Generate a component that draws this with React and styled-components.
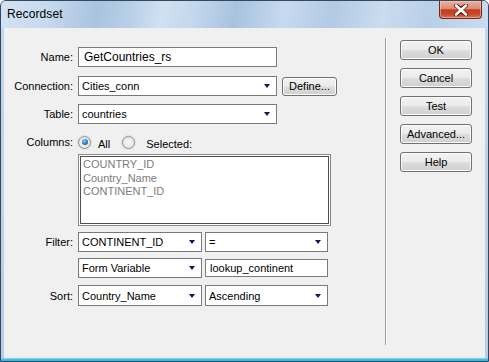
import React from "react";
import styled, { createGlobalStyle } from "styled-components";

const Global = createGlobalStyle`
  html, body {
    margin: 0;
    padding: 0;
    background: #ffffff;
  }
  body {
    font-family: "Liberation Sans", Arial, sans-serif;
  }
`;

const App = () => {
  return (
    <>
      <Global />
      <Window>
        <TitleBar>
          <Title>Recordset</Title>
          <CloseButton>
            <svg width="16" height="12" viewBox="0 0 16 12">
              <path
                d="M3 1.5 L8 5 L13 1.5 M3 10.5 L8 7 L13 10.5"
                stroke="#5b1a10"
                strokeWidth="4.2"
                fill="none"
                strokeLinecap="round"
              />
              <path
                d="M3 1.5 L13 10.5 M13 1.5 L3 10.5"
                stroke="#ffffff"
                strokeWidth="2.6"
                fill="none"
                strokeLinecap="round"
              />
            </svg>
          </CloseButton>
        </TitleBar>
        <Client>
          <FormPanel>
            <Row>
              <Label>Name:</Label>
              <TextInput $width={199} $big>
                GetCountries_rs
              </TextInput>
            </Row>
            <Row $mt={9}>
              <Label>Connection:</Label>
              <Controls>
                <Select $width={199}>
                  <span>Cities_conn</span>
                  <Arrow />
                </Select>
                <Button $width={55} $height={19} $ml={2}>
                  Define...
                </Button>
              </Controls>
            </Row>
            <Row $mt={8}>
              <Label>Table:</Label>
              <Select $width={199}>
                <span>countries</span>
                <Arrow />
              </Select>
            </Row>
            <Row $mt={10}>
              <Label>Columns:</Label>
              <Controls>
                <Radio $checked />
                <OptionText>All</OptionText>
                <Radio $ml={9} />
                <OptionText $gap={8}>Selected:</OptionText>
              </Controls>
            </Row>
            <Row $mt={4}>
              <span />
              <ListBox>
                <ListItem>COUNTRY_ID</ListItem>
                <ListItem>Country_Name</ListItem>
                <ListItem>CONTINENT_ID</ListItem>
              </ListBox>
            </Row>
            <Row $mt={6}>
              <Label>Filter:</Label>
              <Controls>
                <Select $width={124}>
                  <span>CONTINENT_ID</span>
                  <Arrow />
                </Select>
                <Select $width={123}>
                  <span>=</span>
                  <Arrow />
                </Select>
              </Controls>
            </Row>
            <Row $mt={6}>
              <span />
              <Controls>
                <Select $width={124}>
                  <span>Form Variable</span>
                  <Arrow />
                </Select>
                <TextInput $width={123} $height={18}>
                  lookup_continent
                </TextInput>
              </Controls>
            </Row>
            <Row $mt={7}>
              <Label>Sort:</Label>
              <Controls>
                <Select $width={124} $height={21}>
                  <span>Country_Name</span>
                  <Arrow />
                </Select>
                <Select $width={123} $height={21}>
                  <span>Ascending</span>
                  <Arrow />
                </Select>
              </Controls>
            </Row>
          </FormPanel>
          <Separator />
          <ButtonColumn>
            <Button>OK</Button>
            <Button>Cancel</Button>
            <Button>Test</Button>
            <Button>Advanced...</Button>
            <Button>Help</Button>
          </ButtonColumn>
        </Client>
        <FrameBottom />
      </Window>
    </>
  );
};

export default App;

const Window = styled.div`
  width: 489px;
  height: 362px;
  box-sizing: border-box;
  border: 1px solid #34475c;
  border-radius: 6px 6px 0 0;
  background: linear-gradient(180deg, #c4d8ee 0%, #b6cde7 100%);
  display: flex;
  flex-direction: column;
  overflow: hidden;
`;

const TitleBar = styled.div`
  height: 27px;
  display: flex;
  align-items: flex-start;
  justify-content: space-between;
  background: linear-gradient(
    100deg,
    #d3e3f3 0%,
    #c6d9ee 10%,
    #a9c3df 20%,
    #b9d0e8 27%,
    #d0e1f2 33%,
    #c2d7ed 40%,
    #a8c2de 48%,
    #c6daef 58%,
    #b2cae4 68%,
    #c9dcf0 78%,
    #b8cfe8 88%,
    #c9dcf0 100%
  );
`;

const Title = styled.div`
  font-size: 12px;
  color: #000;
  line-height: 27px;
  padding-left: 6px;
  letter-spacing: 0.1px;
`;

const CloseButton = styled.div`
  width: 43px;
  height: 18px;
  box-sizing: border-box;
  margin-right: 6px;
  border: 1px solid #6a2a1e;
  border-top: none;
  border-radius: 0 0 4px 4px;
  background: linear-gradient(
    180deg,
    #e9b2a2 0%,
    #dc8a74 45%,
    #c43b1c 52%,
    #c94a2c 80%,
    #d97a5a 100%
  );
  display: flex;
  align-items: center;
  justify-content: center;
  box-shadow: inset 0 0 0 1px rgba(255, 210, 200, 0.5);
`;

const Client = styled.div`
  flex: 1;
  margin: 0 3px;
  background: #f0f0f0;
  display: flex;
`;

const FrameBottom = styled.div`
  height: 3px;
  background: linear-gradient(180deg, #b4d6ee 0%, #3cc3ee 40%, #2fb4e4 100%);
`;

const FormPanel = styled.div`
  width: 381px;
  padding-top: 19px;
  display: flex;
  flex-direction: column;
`;

const Row = styled.div`
  display: grid;
  grid-template-columns: 69px auto;
  column-gap: 5px;
  align-items: center;
  justify-items: start;
  margin-top: ${(p) => p.$mt || 0}px;
`;

const Label = styled.div`
  justify-self: end;
  font-size: 11px;
  color: #000;
`;

const Controls = styled.div`
  display: flex;
  align-items: center;
  gap: 3px;
`;

const TextInput = styled.div`
  width: ${(p) => p.$width}px;
  height: ${(p) => p.$height || 20}px;
  box-sizing: border-box;
  border: 1px solid #7a7a7a;
  background: #fff;
  font-size: ${(p) => (p.$big ? 12 : 11)}px;
  color: #000;
  display: flex;
  align-items: center;
  padding-left: ${(p) => (p.$big ? 5 : 4)}px;
`;

const Select = styled.div`
  width: ${(p) => p.$width}px;
  height: ${(p) => p.$height || 20}px;
  box-sizing: border-box;
  border: 1px solid #7a7a7a;
  background: #fff;
  font-size: 11px;
  color: #000;
  display: flex;
  align-items: center;
  justify-content: space-between;
  padding: 0 6px 0 3px;
`;

const Arrow = styled.span`
  width: 0;
  height: 0;
  border-left: 3.5px solid transparent;
  border-right: 3.5px solid transparent;
  border-top: 4px solid #151560;
`;

const Radio = styled.span`
  width: 13px;
  height: 13px;
  margin-left: ${(p) => p.$ml || 0}px;
  box-sizing: border-box;
  border: 1px solid #8f9090;
  border-radius: 50%;
  background: radial-gradient(circle at 50% 50%, #f8f8f8 0%, #dedede 100%);
  box-shadow: 0 0 0 1px #e0e0e0;
  display: flex;
  align-items: center;
  justify-content: center;
  &::after {
    content: "";
    display: ${(p) => (p.$checked ? "block" : "none")};
    width: 6px;
    height: 6px;
    border-radius: 50%;
    background: radial-gradient(circle at 40% 35%, #8fd0f4 0%, #1a73b8 60%, #0b4f8c 100%);
  }
`;

const OptionText = styled.span`
  font-size: 11px;
  color: #000;
  padding-top: 4px;
  margin-left: ${(p) => p.$gap || 4}px;
`;

const ListBox = styled.div`
  width: 253px;
  height: 72px;
  box-sizing: border-box;
  border: 1px solid #8a8a8a;
  box-shadow: inset 0 0 0 1px #ffffff, inset 0 0 0 2px #505050;
  background: #fff;
  padding: 3px 4px;
`;

const ListItem = styled.div`
  font-size: 11px;
  line-height: 13.5px;
  color: #7d7d7d;
`;

const Separator = styled.div`
  width: 0;
  margin: 10px 0 13px 0;
  border-left: 1px solid #a0a0a0;
  border-right: 1px solid #ffffff;
`;

const ButtonColumn = styled.div`
  padding: 12px 0 0 13px;
  display: flex;
  flex-direction: column;
  gap: 8px;
`;

const Button = styled.div`
  width: ${(p) => p.$width || 72}px;
  height: ${(p) => p.$height || 20}px;
  margin-left: ${(p) => p.$ml || 0}px;
  box-sizing: border-box;
  border: 1px solid #707070;
  border-radius: 3px;
  background: linear-gradient(
    180deg,
    #f2f2f2 0%,
    #ebebeb 48%,
    #dddddd 52%,
    #cfcfcf 100%
  );
  box-shadow: inset 0 0 0 1px #fcfcfc;
  font-size: 11px;
  color: #000;
  display: flex;
  align-items: center;
  justify-content: center;
`;
